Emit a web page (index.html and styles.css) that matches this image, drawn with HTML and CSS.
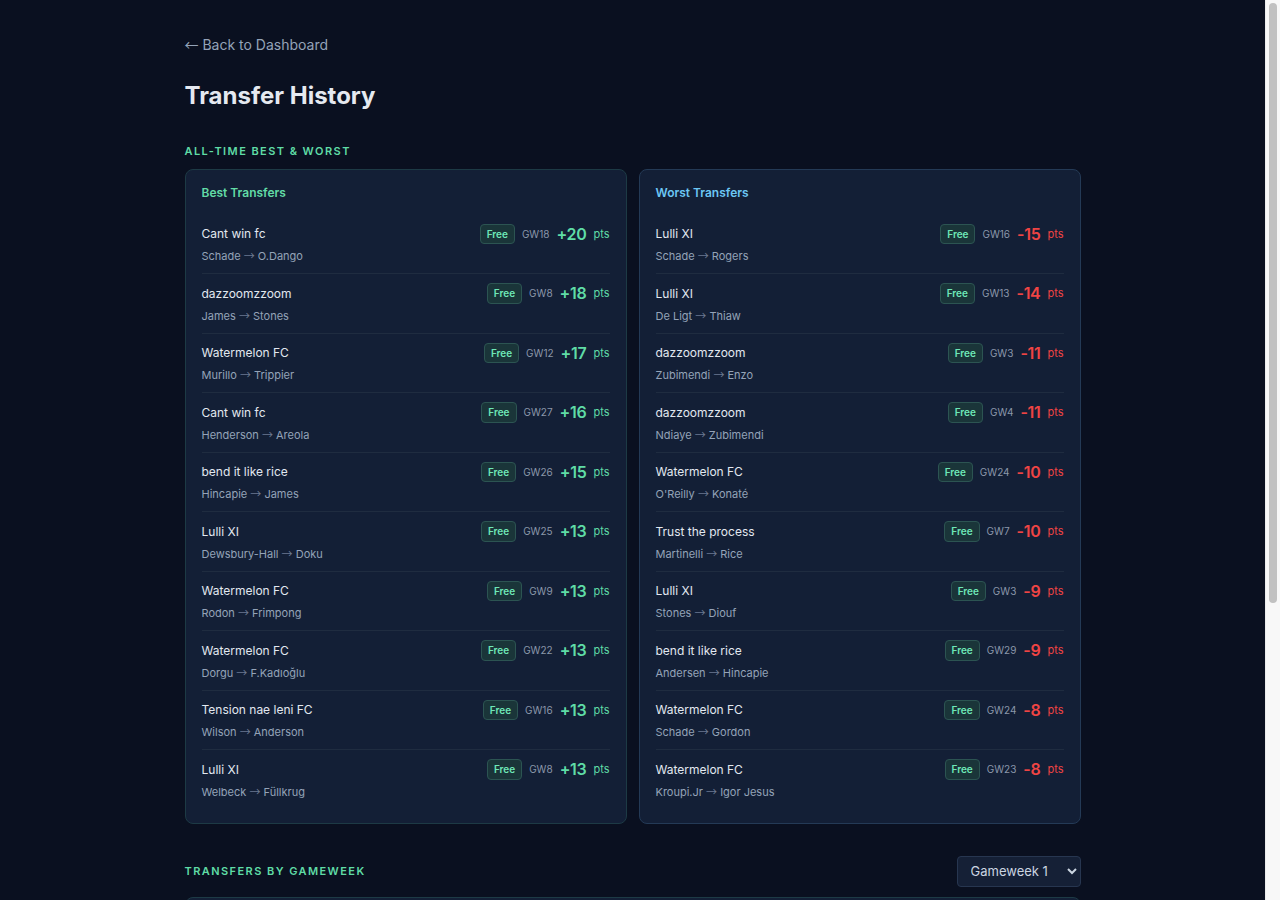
FILE: index.html
```html
<!DOCTYPE html>
<html lang="en">
<head>
    <meta charset="UTF-8">
    <meta name="viewport" content="width=device-width, initial-scale=1.0">
    <title>Transfer History</title>
    <link rel="stylesheet" href="styles.css">
</head>
<body>
    <div class="page">
        <div class="back"><a href="#"><span class="arrow">&larr;</span> Back to Dashboard</a></div>
        <h1 class="page-title">Transfer History</h1>

        <div class="section-label">All-Time Best &amp; Worst</div>
        <div class="split">
            <div class="card card-best">
                <div class="card-title best">Best Transfers</div>
                <div class="list">
                    <div class="row">
                        <div class="row-top"><span class="manager">Cant win fc</span><div class="meta"><span class="badge">Free</span><span class="gw">GW18</span><b class="pts up">+20</b><span class="unit up">pts</span></div></div>
                        <div class="swap">Schade <span class="arrow">&rarr;</span> O.Dango</div>
                    </div>
                    <div class="row">
                        <div class="row-top"><span class="manager">dazzoomzzoom</span><div class="meta"><span class="badge">Free</span><span class="gw">GW8</span><b class="pts up">+18</b><span class="unit up">pts</span></div></div>
                        <div class="swap">James <span class="arrow">&rarr;</span> Stones</div>
                    </div>
                    <div class="row">
                        <div class="row-top"><span class="manager">Watermelon FC</span><div class="meta"><span class="badge">Free</span><span class="gw">GW12</span><b class="pts up">+17</b><span class="unit up">pts</span></div></div>
                        <div class="swap">Murillo <span class="arrow">&rarr;</span> Trippier</div>
                    </div>
                    <div class="row">
                        <div class="row-top"><span class="manager">Cant win fc</span><div class="meta"><span class="badge">Free</span><span class="gw">GW27</span><b class="pts up">+16</b><span class="unit up">pts</span></div></div>
                        <div class="swap">Henderson <span class="arrow">&rarr;</span> Areola</div>
                    </div>
                    <div class="row">
                        <div class="row-top"><span class="manager">bend it like rice</span><div class="meta"><span class="badge">Free</span><span class="gw">GW26</span><b class="pts up">+15</b><span class="unit up">pts</span></div></div>
                        <div class="swap">Hincapie <span class="arrow">&rarr;</span> James</div>
                    </div>
                    <div class="row">
                        <div class="row-top"><span class="manager">Lulli XI</span><div class="meta"><span class="badge">Free</span><span class="gw">GW25</span><b class="pts up">+13</b><span class="unit up">pts</span></div></div>
                        <div class="swap">Dewsbury-Hall <span class="arrow">&rarr;</span> Doku</div>
                    </div>
                    <div class="row">
                        <div class="row-top"><span class="manager">Watermelon FC</span><div class="meta"><span class="badge">Free</span><span class="gw">GW9</span><b class="pts up">+13</b><span class="unit up">pts</span></div></div>
                        <div class="swap">Rodon <span class="arrow">&rarr;</span> Frimpong</div>
                    </div>
                    <div class="row">
                        <div class="row-top"><span class="manager">Watermelon FC</span><div class="meta"><span class="badge">Free</span><span class="gw">GW22</span><b class="pts up">+13</b><span class="unit up">pts</span></div></div>
                        <div class="swap">Dorgu <span class="arrow">&rarr;</span> F.Kadıoğlu</div>
                    </div>
                    <div class="row">
                        <div class="row-top"><span class="manager">Tension nae leni FC</span><div class="meta"><span class="badge">Free</span><span class="gw">GW16</span><b class="pts up">+13</b><span class="unit up">pts</span></div></div>
                        <div class="swap">Wilson <span class="arrow">&rarr;</span> Anderson</div>
                    </div>
                    <div class="row">
                        <div class="row-top"><span class="manager">Lulli XI</span><div class="meta"><span class="badge">Free</span><span class="gw">GW8</span><b class="pts up">+13</b><span class="unit up">pts</span></div></div>
                        <div class="swap">Welbeck <span class="arrow">&rarr;</span> Füllkrug</div>
                    </div>
                </div>
            </div>

            <div class="card card-worst">
                <div class="card-title worst">Worst Transfers</div>
                <div class="list">
                    <div class="row">
                        <div class="row-top"><span class="manager">Lulli XI</span><div class="meta"><span class="badge">Free</span><span class="gw">GW16</span><b class="pts down">-15</b><span class="unit down">pts</span></div></div>
                        <div class="swap">Schade <span class="arrow">&rarr;</span> Rogers</div>
                    </div>
                    <div class="row">
                        <div class="row-top"><span class="manager">Lulli XI</span><div class="meta"><span class="badge">Free</span><span class="gw">GW13</span><b class="pts down">-14</b><span class="unit down">pts</span></div></div>
                        <div class="swap">De Ligt <span class="arrow">&rarr;</span> Thiaw</div>
                    </div>
                    <div class="row">
                        <div class="row-top"><span class="manager">dazzoomzzoom</span><div class="meta"><span class="badge">Free</span><span class="gw">GW3</span><b class="pts down">-11</b><span class="unit down">pts</span></div></div>
                        <div class="swap">Zubimendi <span class="arrow">&rarr;</span> Enzo</div>
                    </div>
                    <div class="row">
                        <div class="row-top"><span class="manager">dazzoomzzoom</span><div class="meta"><span class="badge">Free</span><span class="gw">GW4</span><b class="pts down">-11</b><span class="unit down">pts</span></div></div>
                        <div class="swap">Ndiaye <span class="arrow">&rarr;</span> Zubimendi</div>
                    </div>
                    <div class="row">
                        <div class="row-top"><span class="manager">Watermelon FC</span><div class="meta"><span class="badge">Free</span><span class="gw">GW24</span><b class="pts down">-10</b><span class="unit down">pts</span></div></div>
                        <div class="swap">O'Reilly <span class="arrow">&rarr;</span> Konaté</div>
                    </div>
                    <div class="row">
                        <div class="row-top"><span class="manager">Trust the process</span><div class="meta"><span class="badge">Free</span><span class="gw">GW7</span><b class="pts down">-10</b><span class="unit down">pts</span></div></div>
                        <div class="swap">Martinelli <span class="arrow">&rarr;</span> Rice</div>
                    </div>
                    <div class="row">
                        <div class="row-top"><span class="manager">Lulli XI</span><div class="meta"><span class="badge">Free</span><span class="gw">GW3</span><b class="pts down">-9</b><span class="unit down">pts</span></div></div>
                        <div class="swap">Stones <span class="arrow">&rarr;</span> Diouf</div>
                    </div>
                    <div class="row">
                        <div class="row-top"><span class="manager">bend it like rice</span><div class="meta"><span class="badge">Free</span><span class="gw">GW29</span><b class="pts down">-9</b><span class="unit down">pts</span></div></div>
                        <div class="swap">Andersen <span class="arrow">&rarr;</span> Hincapie</div>
                    </div>
                    <div class="row">
                        <div class="row-top"><span class="manager">Watermelon FC</span><div class="meta"><span class="badge">Free</span><span class="gw">GW24</span><b class="pts down">-8</b><span class="unit down">pts</span></div></div>
                        <div class="swap">Schade <span class="arrow">&rarr;</span> Gordon</div>
                    </div>
                    <div class="row">
                        <div class="row-top"><span class="manager">Watermelon FC</span><div class="meta"><span class="badge">Free</span><span class="gw">GW23</span><b class="pts down">-8</b><span class="unit down">pts</span></div></div>
                        <div class="swap">Kroupi.Jr <span class="arrow">&rarr;</span> Igor Jesus</div>
                    </div>
                </div>
            </div>
        </div>

        <div class="section-head">
            <div class="section-label flat">Transfers by Gameweek</div>
            <select class="gw-select">
                <option>Gameweek 1</option>
                <option>Gameweek 2</option>
                <option>Gameweek 3</option>
            </select>
        </div>
        <div class="card card-best">
            <div class="card-title best">Gameweek 1</div>
            <div class="list">
                <div class="row">
                    <div class="row-top"><span class="manager">Watermelon FC</span><div class="meta"><span class="badge">Free</span><span class="gw">GW1</span><b class="pts up">+6</b><span class="unit up">pts</span></div></div>
                    <div class="swap">Isak <span class="arrow">&rarr;</span> Haaland</div>
                </div>
                <div class="row">
                    <div class="row-top"><span class="manager">Lulli XI</span><div class="meta"><span class="badge">Free</span><span class="gw">GW1</span><b class="pts up">+4</b><span class="unit up">pts</span></div></div>
                    <div class="swap">Saka <span class="arrow">&rarr;</span> Salah</div>
                </div>
                <div class="row">
                    <div class="row-top"><span class="manager">Tension nae leni FC</span><div class="meta"><span class="badge">Free</span><span class="gw">GW1</span><b class="pts up">+1</b><span class="unit up">pts</span></div></div>
                    <div class="swap">Cunha <span class="arrow">&rarr;</span> Wissa</div>
                </div>
                <div class="row">
                    <div class="row-top"><span class="manager">Cant win fc</span><div class="meta"><span class="badge">Free</span><span class="gw">GW1</span><b class="pts down">-2</b><span class="unit down">pts</span></div></div>
                    <div class="swap">Palmer <span class="arrow">&rarr;</span> Mbeumo</div>
                </div>
                <div class="row">
                    <div class="row-top"><span class="manager">dazzoomzzoom</span><div class="meta"><span class="badge">Free</span><span class="gw">GW1</span><b class="pts down">-3</b><span class="unit down">pts</span></div></div>
                    <div class="swap">Gvardiol <span class="arrow">&rarr;</span> Gabriel</div>
                </div>
                <div class="row">
                    <div class="row-top"><span class="manager">bend it like rice</span><div class="meta"><span class="badge">Free</span><span class="gw">GW1</span><b class="pts down">-4</b><span class="unit down">pts</span></div></div>
                    <div class="swap">Wood <span class="arrow">&rarr;</span> Watkins</div>
                </div>
            </div>
        </div>
    </div>

    <div class="scrollbar"><div class="scroll-thumb"></div></div>
</body>
</html>
```

FILE: styles.css
```css
html, body {
    margin: 0;
    padding: 0;
    background-color: #0a1020;
    color: #e2e8f0;
    font-family: Inter, "Noto Sans", sans-serif;
}

body {
    padding-right: 15px;
}

/* page scrollbar, drawn over the right edge */
.scrollbar {
    position: fixed;
    top: 0;
    right: 0;
    width: 15px;
    height: 100vh;
    background-color: #f8f8f8;
    border-left: 1px solid #ececec;
    box-sizing: border-box;
}

.scroll-thumb {
    margin: 3px 3px 0 3px;
    height: 600px;
    background-color: #c1c1c1;
    border-radius: 4px;
}

.page {
    max-width: 896px;
    margin: 0 auto;
    padding: 35px 0 40px;
}

.back {
    font-size: 14px;
    line-height: 20px;
    height: 20px;
}

.back a {
    color: #94a3b8;
    text-decoration: none;
}

.back .arrow {
    color: #94a3b8;
}

.arrow {
    font-family: "Noto Sans CJK SC", sans-serif;
    line-height: 0;
}

.page-title {
    margin: 25px 0 0;
    font-size: 24px;
    line-height: 32px;
    font-weight: 700;
    color: #e5e9f0;
}

.section-label {
    margin: 31px 0 10px;
    font-size: 11px;
    line-height: 16px;
    font-weight: 600;
    letter-spacing: 0.13em;
    text-transform: uppercase;
    color: #5fdca6;
}

.section-label.flat {
    margin: 0;
}

.split {
    display: grid;
    grid-template-columns: 1fr 1fr;
    gap: 12px;
}

.card {
    background-color: #131f36;
    border: 1px solid #1d3a45;
    border-radius: 8px;
    padding: 13px 16px 14px;
}

.card-worst {
    border-color: #243a56;
}

.card-title {
    font-size: 12px;
    line-height: 19.5px;
    font-weight: 600;
    margin-bottom: 12px;
}

.card-title.best { color: #62dba6; }
.card-title.worst { color: #6cc6f4; }

.row {
    padding: 9px 0 8.5px;
    border-bottom: 1px solid #1f2c40;
}

.row:last-child {
    border-bottom: none;
}

.row-top {
    display: flex;
    justify-content: space-between;
    align-items: center;
    height: 20.5px;
}

.manager {
    font-size: 12px;
    line-height: 19.5px;
    color: #e2e8f0;
}

.meta {
    display: flex;
    align-items: center;
    gap: 7px;
}

.badge {
    font-size: 10px;
    line-height: 14.5px;
    font-weight: 600;
    padding: 2px 6px;
    border: 1px solid #2c5452;
    border-radius: 4px;
    background-color: #1a3539;
    color: #6ee7b7;
}

.gw {
    font-size: 10px;
    color: #8b97aa;
}

.pts {
    font-size: 16px;
    line-height: 20px;
    font-weight: 600;
    letter-spacing: -0.3px;
}

.unit {
    font-size: 11px;
}

.up { color: #5fdca6; }
.down { color: #ef4444; }

.swap {
    margin-top: 4px;
    height: 16.5px;
    font-size: 11px;
    line-height: 16.5px;
    color: #94a3b8;
}

.swap .arrow {
    color: #6b7890;
}

.section-head {
    display: flex;
    justify-content: space-between;
    align-items: center;
    margin: 32px 0 10px;
}

.gw-select {
    width: 124px;
    height: 31px;
    padding: 0 4px 0 9px;
    font-family: Inter, "Noto Sans", sans-serif;
    font-size: 13px;
    color: #cbd5e1;
    background-color: #152036;
    border: 1px solid #273650;
    border-radius: 4px;
    color-scheme: dark;
}
```
